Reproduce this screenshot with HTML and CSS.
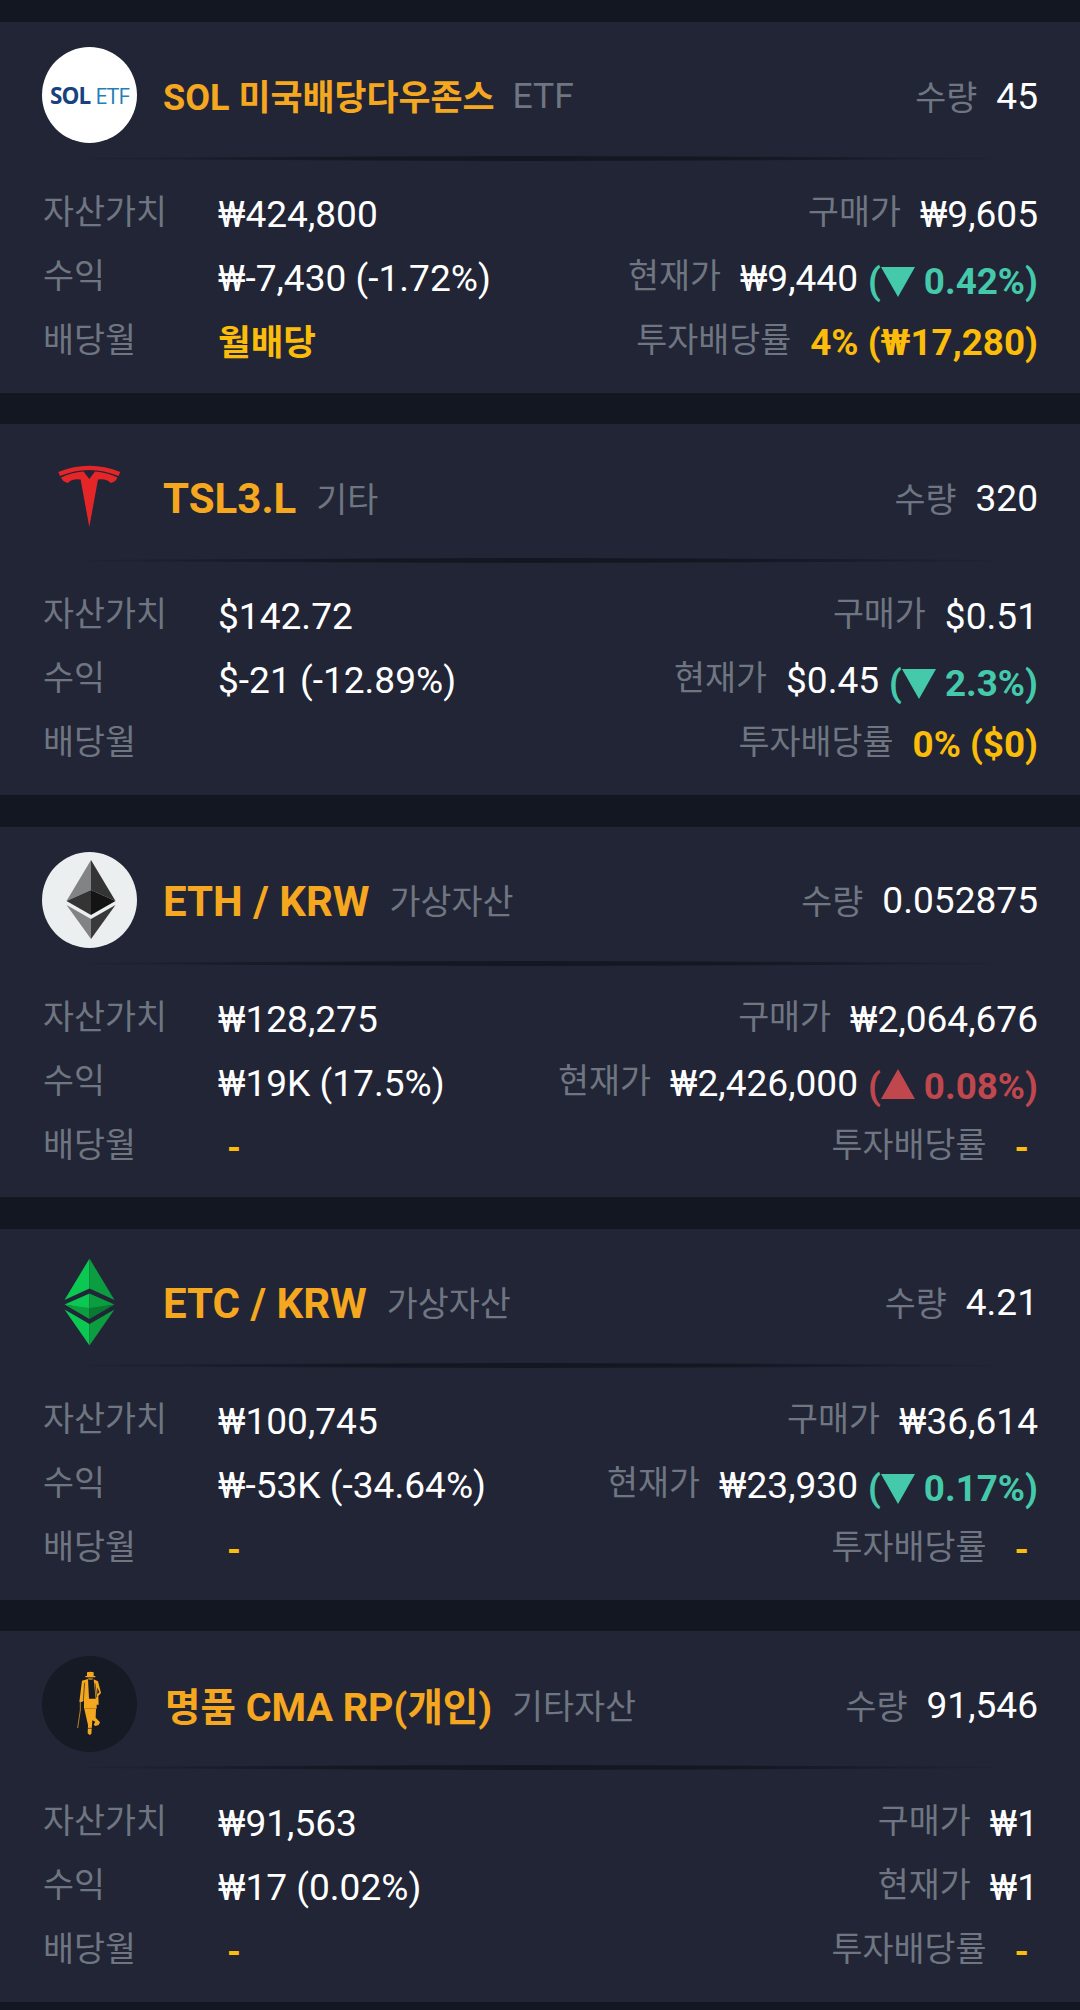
FILE: index.html
```html
<!DOCTYPE html>
<html lang="ko">
<head>
    <meta charset="UTF-8">
    <meta name="viewport" content="width=device-width, initial-scale=1.0">
    <title>보유 자산</title>
    <link rel="stylesheet" href="styles.css">
</head>
<body>
    <div class="list">
        <div class="card">
            <div class="head">
                <div class="logo sol"><b>SOL</b><span>ETF</span></div>
                <h2 class="title ko">SOL <span>미국배당다우존스</span></h2>
                <span class="type en">ETF</span>
                <span class="label qty">수량</span>
                <span class="value">45</span>
            </div>
            <svg class="line" viewBox="0 0 900 6" preserveAspectRatio="none"><path d="M0 2L450 0L900 2V4L450 6L0 4Z" fill="url(#fade)"/></svg>
            <div class="row">
                <span class="label first">자산가치</span>
                <span class="value">₩424,800</span>
                <span class="label right">구매가</span>
                <span class="value">₩9,605</span>
            </div>
            <div class="row">
                <span class="label first">수익</span>
                <span class="value">₩-7,430 (-1.72%)</span>
                <span class="label right">현재가</span>
                <span class="value">₩9,440</span>
                <span class="change down">(<svg class="tri" viewBox="0 0 34 30"><path d="M0 0H34L17 30Z"/></svg>0.42%)</span>
            </div>
            <div class="row">
                <span class="label first">배당월</span>
                <span class="month">월배당</span>
                <span class="label right">투자배당률</span>
                <span class="yield">4% (₩17,280)</span>
            </div>
        </div>

        <div class="card">
            <div class="head">
                <div class="logo">
                    <svg viewBox="0 0 95 96" fill="#e52629">
                        <path d="M16.300 23Q47.300 10.500 78.300 23L76.500 27Q47.300 15 18 27Z"/>
                        <path d="M19 28.500Q29 23.500 41.500 22.500L47.300 30L53 22.500Q65.500 23.500 75.500 28.500Q73.500 33 68.500 34Q65 29.500 56 30.500L47.300 78L38.600 30.500Q29.500 29.500 26 34Q21 33 19 28.500Z"/>
                    </svg>
                </div>
                <h2 class="title">TSL3.L</h2>
                <span class="type">기타</span>
                <span class="label qty">수량</span>
                <span class="value">320</span>
            </div>
            <svg class="line" viewBox="0 0 900 6" preserveAspectRatio="none"><path d="M0 2L450 0L900 2V4L450 6L0 4Z" fill="url(#fade)"/></svg>
            <div class="row">
                <span class="label first">자산가치</span>
                <span class="value">$142.72</span>
                <span class="label right">구매가</span>
                <span class="value">$0.51</span>
            </div>
            <div class="row">
                <span class="label first">수익</span>
                <span class="value">$-21 (-12.89%)</span>
                <span class="label right">현재가</span>
                <span class="value">$0.45</span>
                <span class="change down">(<svg class="tri" viewBox="0 0 34 30"><path d="M0 0H34L17 30Z"/></svg>2.3%)</span>
            </div>
            <div class="row">
                <span class="label first">배당월</span>
                <span class="label right">투자배당률</span>
                <span class="yield">0% ($0)</span>
            </div>
        </div>

        <div class="card">
            <div class="head">
                <div class="logo eth">
                    <svg viewBox="0 0 95 96">
                        <path d="M49 8L24.500 49L49 38Z" fill="#828384"/>
                        <path d="M49 8L73.500 49L49 38Z" fill="#343434"/>
                        <path d="M49 38L24.500 49L49 63Z" fill="#343434"/>
                        <path d="M49 38L73.500 49L49 63Z" fill="#141414"/>
                        <path d="M24.500 53L49 67V87Z" fill="#828384"/>
                        <path d="M73.500 53L49 67V87Z" fill="#393939"/>
                    </svg>
                </div>
                <h2 class="title">ETH / KRW</h2>
                <span class="type">가상자산</span>
                <span class="label qty">수량</span>
                <span class="value">0.052875</span>
            </div>
            <svg class="line" viewBox="0 0 900 6" preserveAspectRatio="none"><path d="M0 2L450 0L900 2V4L450 6L0 4Z" fill="url(#fade)"/></svg>
            <div class="row">
                <span class="label first">자산가치</span>
                <span class="value">₩128,275</span>
                <span class="label right">구매가</span>
                <span class="value">₩2,064,676</span>
            </div>
            <div class="row">
                <span class="label first">수익</span>
                <span class="value">₩19K (17.5%)</span>
                <span class="label right">현재가</span>
                <span class="value">₩2,426,000</span>
                <span class="change up">(<svg class="tri" viewBox="0 0 34 30"><path d="M0 30H34L17 0Z"/></svg>0.08%)</span>
            </div>
            <div class="row">
                <span class="label first">배당월</span>
                <span class="month none">-</span>
                <span class="label right">투자배당률</span>
                <span class="yield none">-</span>
            </div>
        </div>

        <div class="card">
            <div class="head">
                <div class="logo">
                    <svg viewBox="0 0 95 96">
                        <path d="M47.500 4.500L22.500 46L47.500 34.500Z" fill="#0bc852"/>
                        <path d="M47.500 4.500L72.500 46L47.500 34.500Z" fill="#0b9d40"/>
                        <path d="M47.500 39.500L22.500 50.500L47.500 55Z" fill="#0bc852"/>
                        <path d="M47.500 39.500L72.500 50.500L47.500 55Z" fill="#0b9d40"/>
                        <path d="M22.500 50.500L47.500 54V65Z" fill="#0b9d40"/>
                        <path d="M72.500 50.500L47.500 54V65Z" fill="#087a31"/>
                        <path d="M22.500 55.500L47.500 70V91.500Z" fill="#0bc852"/>
                        <path d="M72.500 55.500L47.500 70V91.500Z" fill="#0b9d40"/>
                    </svg>
                </div>
                <h2 class="title">ETC / KRW</h2>
                <span class="type">가상자산</span>
                <span class="label qty">수량</span>
                <span class="value">4.21</span>
            </div>
            <svg class="line" viewBox="0 0 900 6" preserveAspectRatio="none"><path d="M0 2L450 0L900 2V4L450 6L0 4Z" fill="url(#fade)"/></svg>
            <div class="row">
                <span class="label first">자산가치</span>
                <span class="value">₩100,745</span>
                <span class="label right">구매가</span>
                <span class="value">₩36,614</span>
            </div>
            <div class="row">
                <span class="label first">수익</span>
                <span class="value">₩-53K (-34.64%)</span>
                <span class="label right">현재가</span>
                <span class="value">₩23,930</span>
                <span class="change down">(<svg class="tri" viewBox="0 0 34 30"><path d="M0 0H34L17 30Z"/></svg>0.17%)</span>
            </div>
            <div class="row">
                <span class="label first">배당월</span>
                <span class="month none">-</span>
                <span class="label right">투자배당률</span>
                <span class="yield none">-</span>
            </div>
        </div>

        <div class="card">
            <div class="head">
                <div class="logo man">
                    <svg viewBox="6 18 285 288">
                        <!-- hat and face -->
                        <path d="M141 67Q151 63 161 67V78H166V82H136V78H141Z" fill="#f5a81f"/>
                        <path d="M143 83H159L157 90H146Z" fill="#9a6c1d"/>
                        <!-- coat -->
                        <path d="M126 92L144 87L147 146H167L161 88L174 94L183 129L175 138L176 164H170V176H132V150L126 156H118Z" fill="#f5a81f"/>
                        <path d="M172 112V132L178 127Z" fill="#161a25"/>
                        <path d="M134 98L130 150M165 100L170 142" stroke="#161a25" stroke-width="2"/>
                        <!-- legs -->
                        <path d="M133 177H168L167 203L180 217L176 225L166 228L161 224L166 215L157 211L154 252L149 255L143 250L144 225Z" fill="#f5a81f"/>
                        <path d="M143 235H156" stroke="#161a25" stroke-width="2"/>
                        <!-- cane -->
                        <path d="M121 155V180L113 234" fill="none" stroke="#b98222" stroke-width="3"/>
                    </svg>
                </div>
                <h2 class="title mixed"><span>명품</span> CMA RP(<span>개인</span>)</h2>
                <span class="type">기타자산</span>
                <span class="label qty">수량</span>
                <span class="value">91,546</span>
            </div>
            <svg class="line" viewBox="0 0 900 6" preserveAspectRatio="none"><path d="M0 2L450 0L900 2V4L450 6L0 4Z" fill="url(#fade)"/></svg>
            <div class="row">
                <span class="label first">자산가치</span>
                <span class="value">₩91,563</span>
                <span class="label right">구매가</span>
                <span class="value">₩1</span>
            </div>
            <div class="row">
                <span class="label first">수익</span>
                <span class="value">₩17 (0.02%)</span>
                <span class="label right">현재가</span>
                <span class="value">₩1</span>
            </div>
            <div class="row">
                <span class="label first">배당월</span>
                <span class="month none">-</span>
                <span class="label right">투자배당률</span>
                <span class="yield none">-</span>
            </div>
        </div>
    </div>

    <!-- shared gradient for the divider lines -->
    <svg class="defs">
        <linearGradient id="fade">
            <stop offset="0" stop-color="#131722" stop-opacity="0.2"/>
            <stop offset="0.3" stop-color="#131722"/>
            <stop offset="0.7" stop-color="#131722"/>
            <stop offset="1" stop-color="#131722" stop-opacity="0.2"/>
        </linearGradient>
    </svg>
</body>
</html>
```
FILE: styles.css
```css
body {
    margin: 0;
    height: 2010px;
    overflow: hidden;
    background-color: #131721;
    font-family: Roboto, "Noto Sans CJK KR", sans-serif;
    font-size: 37.1px;
    color: #fff;
}

.list {
    display: flex;
    flex-direction: column;
    gap: 31.5px;
    padding-top: 22px;
}

.card {
    box-sizing: border-box;
    height: 370.8px;
    padding: 25px 42px 0;
    background-color: #212536;
}

.head {
    display: flex;
    align-items: center;
    height: 96px;
    white-space: nowrap;
}

.head .value,
.head .type.en {
    padding-top: 2px;
}

.logo {
    width: 95px;
    height: 96px;
    flex: none;
    margin-right: 26px;
    border-radius: 50%;
    overflow: hidden;
}

.logo svg {
    display: block;
    width: 95px;
    height: 96px;
}

.sol {
    display: flex;
    align-items: center;
    justify-content: center;
    gap: 5px;
    background-color: #fff;
    font-family: "Open Sans", sans-serif;
    font-size: 22.5px;
    letter-spacing: -0.9px;
    color: #1f7fb8;
}

.sol b {
    color: #17417f;
}

.eth {
    background-color: #eceff0;
}

.man {
    background-color: #161a25;
}

.title {
    margin: 0 20px 0 0;
    padding-top: 3px;
    font-size: 42px;
    font-weight: bold;
    color: #f5a81f;
}

.ko {
    margin-right: 18px;
    padding-top: 0;
    font-size: 36px;
}

.ko span {
    font-size: 34.8px;
}

.mixed {
    margin-left: 2px;
    padding-top: 0;
    font-size: 39.5px;
}

.mixed span {
    font-size: 38.5px;
}

.type,
.label {
    font-size: 33.7px;
    color: #6f7681;
}

.en {
    font-size: 35.5px;
}

.qty,
.right {
    margin-left: auto;
    margin-right: 19px;
}

.line {
    display: block;
    width: 900px;
    height: 5px;
    margin: 13px auto 24px;
}

.row {
    display: flex;
    height: 64px;
    line-height: 60px;
    white-space: nowrap;
}

.row .label {
    line-height: 56px;
}

.first {
    width: 175px;
    padding-left: 1px;
}

.change,
.month,
.yield {
    font-weight: bold;
    font-size: 36.8px;
    color: #fbbc0a;
}

.month {
    font-size: 35.5px;
}

.change {
    margin-left: 10px;
    line-height: 66px;
}

.down {
    color: #45c9ab;
}

.up {
    color: #c0474d;
}

.tri {
    width: 34px;
    height: 30px;
    margin-right: 9px;
    fill: currentColor;
}

.down .tri {
    vertical-align: -3px;
}

.none {
    padding: 0 9px;
}

.defs {
    position: absolute;
    width: 0;
    height: 0;
}
```
